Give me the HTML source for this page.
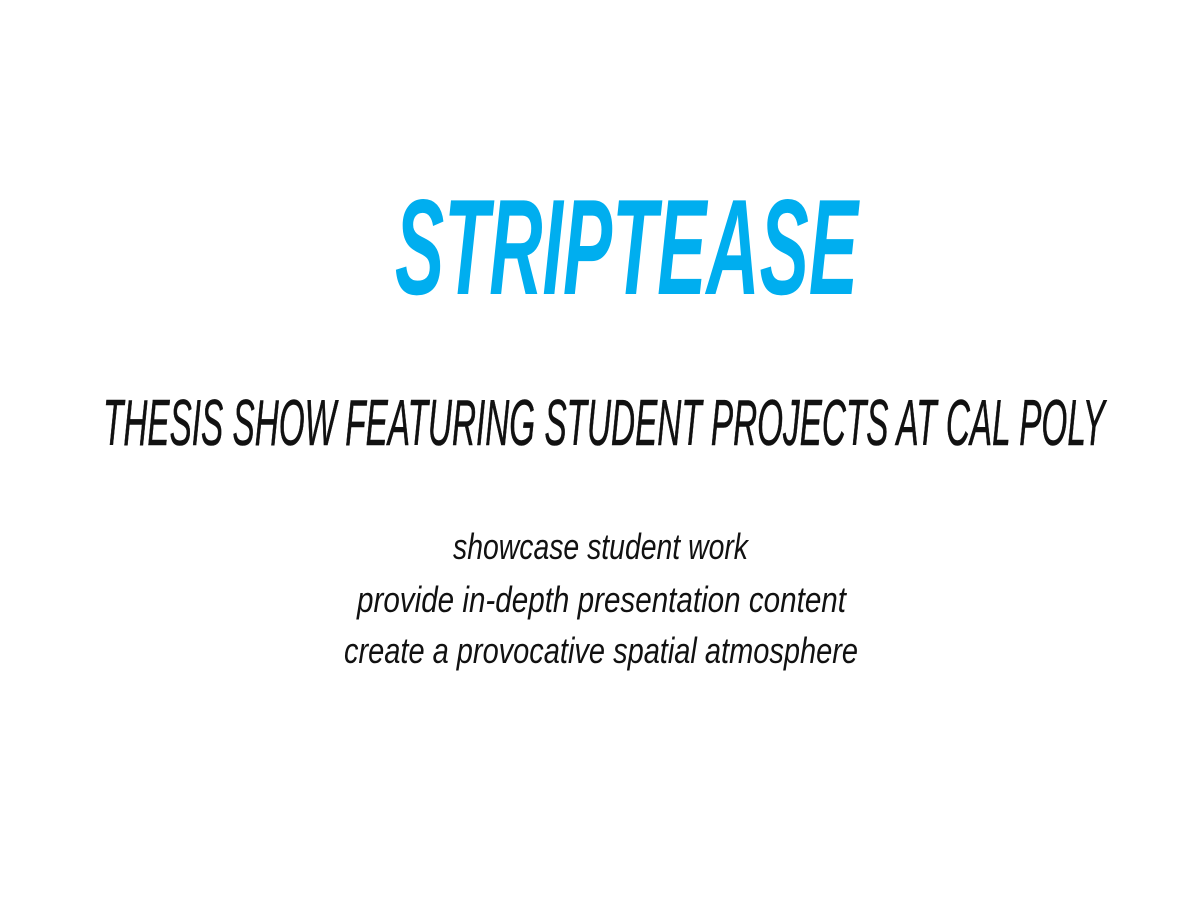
<!DOCTYPE html>
<html><head><meta charset="utf-8"><style>
html,body{margin:0;padding:0;background:#fff;width:1200px;height:900px;overflow:hidden}
svg{display:block}
text{font-family:"Liberation Sans Narrow","Liberation Sans",sans-serif;font-style:italic}
</style></head><body>
<svg width="1200" height="900" viewBox="0 0 1200 900">
<text x="395" y="294" font-size="136" font-weight="bold" fill="#00aeef" textLength="463" lengthAdjust="spacingAndGlyphs">STRIPTEASE</text>
<text x="103" y="445" font-size="65" fill="#111" stroke="#111" stroke-width="0.6" textLength="1002" lengthAdjust="spacingAndGlyphs">THESIS SHOW FEATURING STUDENT PROJECTS AT CAL POLY</text>
<text x="453" y="559" font-size="36" fill="#111" textLength="295" lengthAdjust="spacingAndGlyphs">showcase student work</text>
<text x="357" y="612" font-size="36" fill="#111" textLength="489" lengthAdjust="spacingAndGlyphs">provide in-depth presentation content</text>
<text x="344" y="663" font-size="36" fill="#111" textLength="514" lengthAdjust="spacingAndGlyphs">create a provocative spatial atmosphere</text>
</svg>
</body></html>
